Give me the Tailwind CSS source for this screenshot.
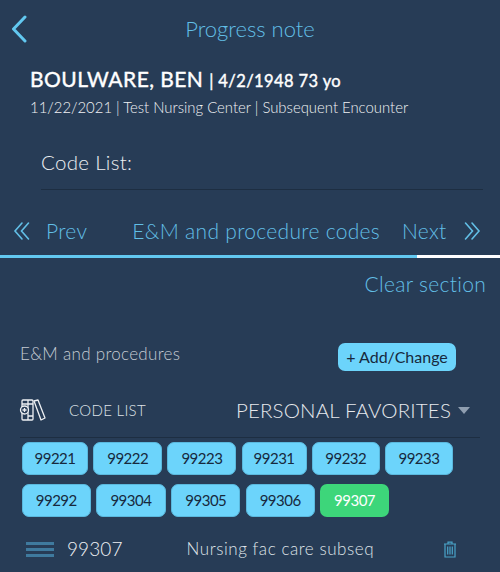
<!DOCTYPE html>
<html lang="en">
<head>
  <meta charset="UTF-8" />
  <title>Progress note</title>
  <script src="https://cdn.jsdelivr.net/npm/@tailwindcss/browser@4"></script>
</head>
<body class="bg-[#273c56] font-['Lato',sans-serif] w-[500px] h-[572px] overflow-hidden">
  <!-- header -->
  <div class="h-[57px] flex items-center px-[11px]">
    <svg class="w-[16px] h-[28px]" viewBox="0 0 16 28" fill="none" stroke="#62c8f0" stroke-width="3" stroke-linecap="round" stroke-linejoin="round"><path d="M14 2 L2.5 14 L14 26"/></svg>
    <div class="flex-1 text-center text-[22px] font-light text-[#62bfe6] pr-[16px]">Progress note</div>
  </div>

  <div class="pl-[30px] h-[80px] pt-[9px]">
    <div class="text-white text-[21px] leading-[26px] tracking-[0.45px] [-webkit-text-stroke:0.4px_white]">BOULWARE, BEN <span class="text-[16.5px] tracking-[0.4px]">| 4/2/1948 73 yo</span></div>
    <div class="text-[#f0f2f4] text-[14.9px] font-light leading-[24px] mt-[1px]">11/22/2021 | Test Nursing Center | Subsequent Encounter</div>
  </div>

  <div class="ml-[41px] mr-[17px] h-[53px] border-b border-[#1d2e42] text-[#eef0f3] text-[20.5px] font-light tracking-[0.3px] pt-[10px]">Code List:</div>

  <!-- section nav -->
  <div class="h-[68px] pt-[16px] flex items-center text-[#62bfe6] text-[21px] font-light tracking-[0.3px] border-b-[3px] border-white relative">
    <svg class="ml-[13px] w-[17px] h-[20px]" viewBox="0 0 17 20" fill="none" stroke="#62bfe6" stroke-width="1.6" stroke-linecap="round"><path d="M9 2 L2 10 L9 18"/><path d="M15.5 2 L8.5 10 L15.5 18"/></svg>
    <span class="ml-[16px]">Prev</span>
    <span class="ml-[45px]">E&amp;M and procedure codes</span>
    <span class="ml-[22px]">Next</span>
    <svg class="ml-[17px] w-[17px] h-[20px]" viewBox="0 0 17 20" fill="none" stroke="#62bfe6" stroke-width="1.6" stroke-linecap="round"><path d="M1.5 2 L8.5 10 L1.5 18"/><path d="M8 2 L15 10 L8 18"/></svg>
    <div class="absolute left-0 bottom-[-3px] w-[417px] h-[3px] bg-[#62c8f0]"></div>
  </div>

  <div class="h-[52px] flex items-center justify-end pr-[14px] text-[#62bfe6] text-[21px] font-light tracking-[0.3px]">Clear section</div>

  <div class="mt-[33px] h-[28px] flex items-center justify-between pl-[20px] pr-[44px]">
    <span class="text-[#c5cbd3] text-[17px] font-light tracking-[0.3px] mb-[6px]">E&amp;M and procedures</span>
    <button class="w-[118px] h-[28px] rounded-[7px] bg-[#6cd4fb] text-[#17293d] text-[16px]">+ Add/Change</button>
  </div>

  <!-- code list -->
  <div class="mt-[19px] mx-[20px] h-[48px] pb-[6px] flex items-center border-b border-[#1d2e42]">
    <svg class="ml-[-1px] w-[27px] h-[26px]" viewBox="0 0 27 26" fill="none" stroke="#eef0f3" stroke-width="1.3" stroke-linejoin="round">
      <rect x="3" y="2" width="11" height="20" rx="1"/>
      <path d="M9 2V22M3 6H14M9 18H14"/>
      <circle cx="5.5" cy="12" r="4" fill="#273c56"/>
      <path d="M3.5 12H7.5M5.5 10V14"/>
      <path d="M15 3L19 2L26 20L22 22Z"/>
    </svg>
    <span class="ml-[23px] text-[#dfe3e8] text-[15px] font-light tracking-[0.3px]">CODE LIST</span>
    <span class="ml-auto text-[#e6e9ed] text-[20.5px] font-light tracking-[0.15px]">PERSONAL FAVORITES</span>
    <svg class="ml-[7px] mr-[10px] w-[12px] h-[7px]" viewBox="0 0 12 7" fill="#8f9eb0"><path d="M0 0H12L6 7Z"/></svg>
  </div>

  <div class="pl-[22px] mt-[4px] flex flex-col gap-[9px] text-[15px] tracking-[-0.5px]">
    <div class="flex gap-[5.2px]">
      <div class="w-[66px] h-[33px] rounded-[7px] bg-[#6cd4fb] border border-[#5ab8dd] text-[#17293d] flex items-center justify-center">99221</div>
      <div class="w-[69px] h-[33px] rounded-[7px] bg-[#6cd4fb] border border-[#5ab8dd] text-[#17293d] flex items-center justify-center">99222</div>
      <div class="w-[69px] h-[33px] rounded-[7px] bg-[#6cd4fb] border border-[#5ab8dd] text-[#17293d] flex items-center justify-center">99223</div>
      <div class="w-[65px] h-[33px] rounded-[7px] bg-[#6cd4fb] border border-[#5ab8dd] text-[#17293d] flex items-center justify-center">99231</div>
      <div class="w-[68px] h-[33px] rounded-[7px] bg-[#6cd4fb] border border-[#5ab8dd] text-[#17293d] flex items-center justify-center">99232</div>
      <div class="w-[68px] h-[33px] rounded-[7px] bg-[#6cd4fb] border border-[#5ab8dd] text-[#17293d] flex items-center justify-center">99233</div>
    </div>
    <div class="flex gap-[5.4px]">
      <div class="w-[68.5px] h-[33px] rounded-[7px] bg-[#6cd4fb] border border-[#5ab8dd] text-[#17293d] flex items-center justify-center">99292</div>
      <div class="w-[70px] h-[33px] rounded-[7px] bg-[#6cd4fb] border border-[#5ab8dd] text-[#17293d] flex items-center justify-center">99304</div>
      <div class="w-[69px] h-[33px] rounded-[7px] bg-[#6cd4fb] border border-[#5ab8dd] text-[#17293d] flex items-center justify-center">99305</div>
      <div class="w-[69px] h-[33px] rounded-[7px] bg-[#6cd4fb] border border-[#5ab8dd] text-[#17293d] flex items-center justify-center">99306</div>
      <div class="w-[69px] h-[33px] rounded-[7px] bg-[#3dd67a] text-white flex items-center justify-center">99307</div>
    </div>
  </div>

  <!-- selected code row -->
  <div class="mt-[16px] flex items-center h-[32px] pl-[26px]">
    <div class="w-[28px] flex flex-col gap-[3px]">
      <div class="h-[3px] bg-[#3f7a9e]"></div>
      <div class="h-[3px] bg-[#3f7a9e]"></div>
      <div class="h-[3px] bg-[#3f7a9e]"></div>
    </div>
    <span class="ml-[13px] text-[#eef0f3] text-[19px] font-light tracking-[0.1px]">99307</span>
    <span class="ml-[64px] text-[#dfe3e8] text-[17px] font-light tracking-[0.55px]">Nursing fac care subseq</span>
    <svg class="ml-auto mr-[43px] w-[14px] h-[17px]" viewBox="0 0 14 17" fill="none" stroke="#4aa3c8" stroke-width="1.2"><path d="M1 3H13M5 3V1.2H9V3"/><path d="M2 3V16H12V3"/><path d="M4.7 5.5V13.5M7 5.5V13.5M9.3 5.5V13.5"/></svg>
  </div>
</body>
</html>
